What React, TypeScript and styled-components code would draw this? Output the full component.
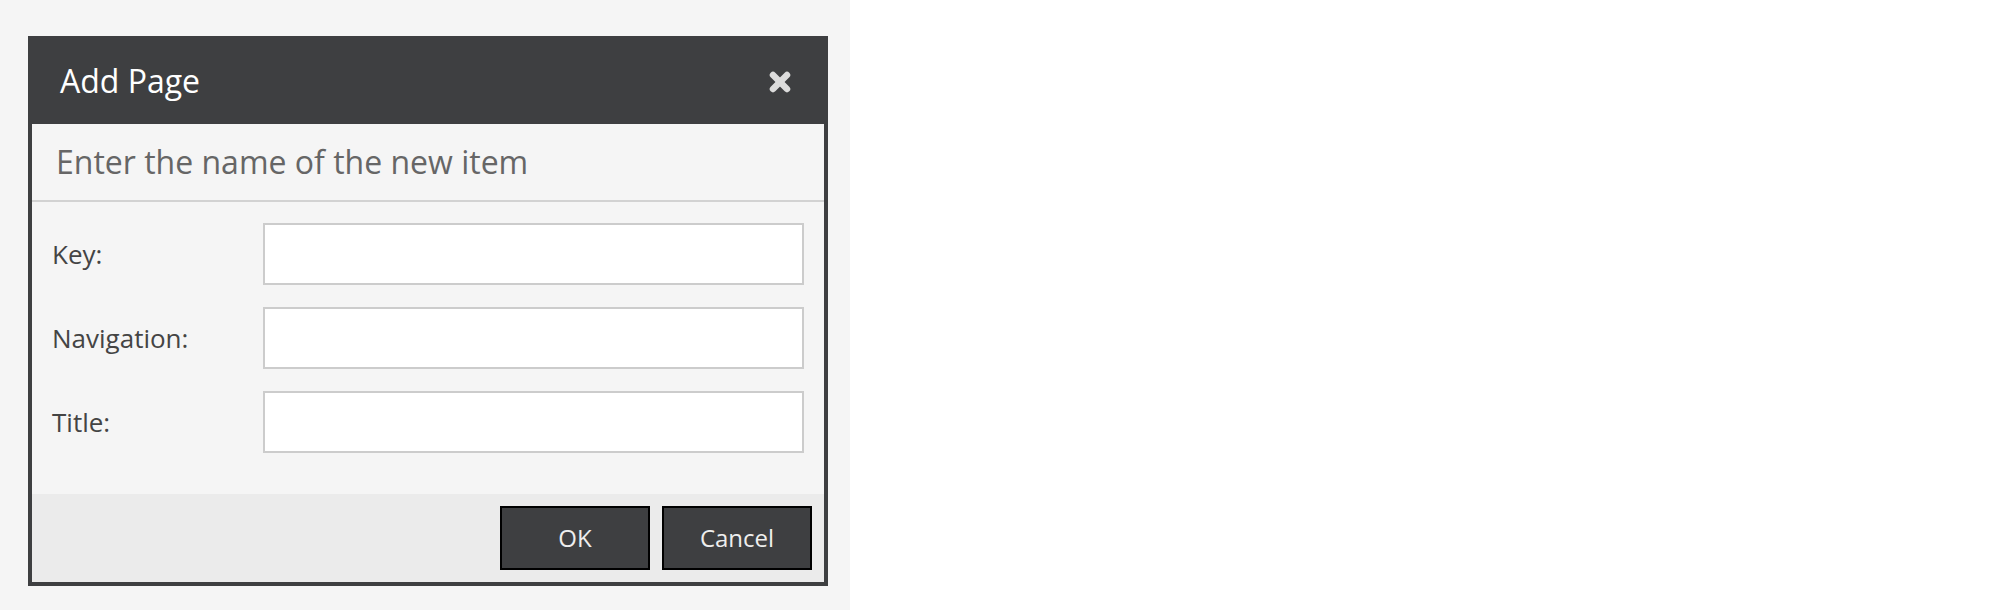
import React from "react";
import styled, { createGlobalStyle } from "styled-components";

const GlobalStyle = createGlobalStyle`
  html, body {
    margin: 0;
    padding: 0;
    background: #ffffff;
  }
  body {
    font-family: "Open Sans", "Noto Sans", sans-serif;
  }
  * { box-sizing: border-box; }
`;

const Backdrop = styled.div`
  width: 850px;
  height: 610px;
  background: #f5f5f5;
  padding: 36px 22px 0 28px;
`;

const Dialog = styled.div`
  width: 800px;
  border: 4px solid #3e3f41;
  background: #f5f5f5;
  display: flex;
  flex-direction: column;
`;

const Header = styled.div`
  height: 84px;
  background: #3e3f41;
  display: flex;
  align-items: center;
  justify-content: space-between;
  padding: 0 33px 4px 28px;
`;

const Title = styled.h1`
  margin: 0;
  font-size: 32px;
  font-weight: 400;
  color: #ffffff;
  line-height: normal;
`;

const CloseButton = styled.button`
  border: 0;
  background: transparent;
  padding: 0;
  margin-top: 4px;
  width: 22px;
  height: 22px;
  display: flex;
  cursor: pointer;
`;

const Subtitle = styled.div`
  height: 78px;
  border-bottom: 2px solid #d2d2d2;
  display: flex;
  align-items: center;
  padding: 0 0 2px 24px;
  font-size: 32px;
  color: #666666;
`;

const Form = styled.div`
  display: flex;
  flex-direction: column;
  gap: 22px;
  padding: 21px 20px 41px 20px;
`;

const Row = styled.label`
  display: grid;
  grid-template-columns: 211px 1fr;
  align-items: center;
`;

const Label = styled.span`
  font-size: 26px;
  color: #444444;
`;

const Input = styled.input`
  height: 62px;
  border: 2px solid #cccccc;
  background: #ffffff;
  outline: none;
  padding: 0 10px;
  font-family: inherit;
  font-size: 24px;
`;

const Footer = styled.div`
  height: 88px;
  background: #ebebeb;
  display: flex;
  justify-content: flex-end;
  align-items: center;
  gap: 12px;
  padding: 0 12px;
`;

const Button = styled.button`
  width: 150px;
  height: 64px;
  background: #3e3f41;
  border: 2px solid #000000;
  color: #eeeeee;
  font-family: "Open Sans", "Noto Sans", sans-serif;
  font-size: 24px;
  padding: 0 0 2px;
  cursor: pointer;
`;

const CloseIcon = () => (
  <svg width="22" height="22" viewBox="0 0 22 22">
    <g stroke="#dcdcdc" strokeWidth="6.5" strokeLinecap="round">
      <line x1="4" y1="4" x2="18" y2="18" />
      <line x1="18" y1="4" x2="4" y2="18" />
    </g>
  </svg>
);

const fields = ["Key:", "Navigation:", "Title:"];

export default function App() {
  return (
    <>
      <GlobalStyle />
      <Backdrop>
        <Dialog>
          <Header>
            <Title>Add Page</Title>
            <CloseButton aria-label="Close">
              <CloseIcon />
            </CloseButton>
          </Header>
          <Subtitle>Enter the name of the new item</Subtitle>
          <Form>
            {fields.map((f) => (
              <Row key={f}>
                <Label>{f}</Label>
                <Input type="text" />
              </Row>
            ))}
          </Form>
          <Footer>
            <Button>OK</Button>
            <Button>Cancel</Button>
          </Footer>
        </Dialog>
      </Backdrop>
    </>
  );
}
